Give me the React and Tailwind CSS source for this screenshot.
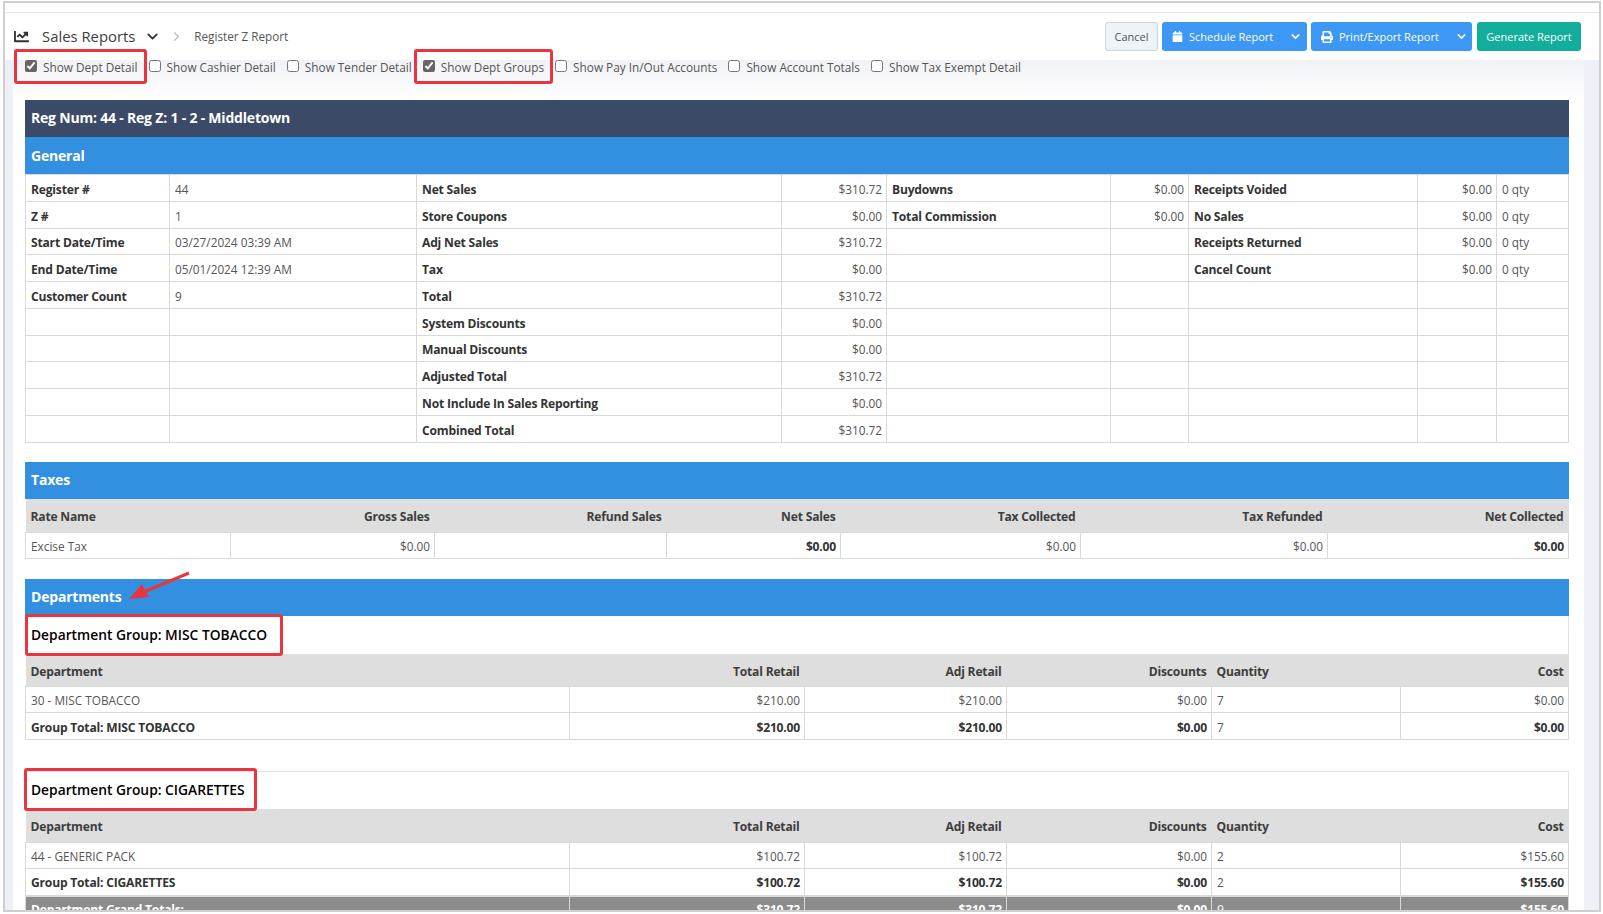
import { ChevronDown, ChevronRight } from "lucide-react";
import { FaCalendar, FaChartLine, FaPrint } from "react-icons/fa";

const general = [
  ["Register #", "44", "Net Sales", "$310.72", "Buydowns", "$0.00", "Receipts Voided", "$0.00", "0 qty"],
  ["Z #", "1", "Store Coupons", "$0.00", "Total Commission", "$0.00", "No Sales", "$0.00", "0 qty"],
  ["Start Date/Time", "03/27/2024 03:39 AM", "Adj Net Sales", "$310.72", "", "", "Receipts Returned", "$0.00", "0 qty"],
  ["End Date/Time", "05/01/2024 12:39 AM", "Tax", "$0.00", "", "", "Cancel Count", "$0.00", "0 qty"],
  ["Customer Count", "9", "Total", "$310.72", "", "", "", "", ""],
  ["", "", "System Discounts", "$0.00", "", "", "", "", ""],
  ["", "", "Manual Discounts", "$0.00", "", "", "", "", ""],
  ["", "", "Adjusted Total", "$310.72", "", "", "", "", ""],
  ["", "", "Not Include In Sales Reporting", "$0.00", "", "", "", "", ""],
  ["", "", "Combined Total", "$310.72", "", "", "", "", ""],
];

const checks = [
  { label: "Show Dept Detail", on: true },
  { label: "Show Cashier Detail" },
  { label: "Show Tender Detail" },
  { label: "Show Dept Groups", on: true },
  { label: "Show Pay In/Out Accounts" },
  { label: "Show Account Totals" },
  { label: "Show Tax Exempt Detail" },
];

function Band({ children, dark, className = "pb-[1px]" }) {
  return (
    <div className={`h-[37px] flex items-center px-[6px] text-[14px] font-bold text-white tracking-[-0.2px] ${dark ? "bg-[#3b4a66]" : "bg-[#338fe0]"} ${className}`}>
      {children}
    </div>
  );
}

function Cell({ children, right, bold }) {
  return (
    <td className={`border border-[#d9d9d9] pl-[5px] pr-[4px] pb-0 overflow-hidden whitespace-nowrap ${right ? "text-right" : "text-left"} ${bold ? "pt-[4px] text-[12.1px] font-bold tracking-[-0.2px] text-[#333]" : "pt-[3px] text-[11.8px] text-[#555]"}`}>
      {children}
    </td>
  );
}

function Head({ children, right }) {
  return (
    <th className={`pl-[5px] pr-[5px] pt-[4px] pb-0 text-[12.1px] font-bold tracking-[-0.2px] text-[#3d3d3d] ${right ? "text-right" : "text-left"}`}>{children}</th>
  );
}

function DeptTable({ name, row, total }) {
  return (
    <table className="w-full table-fixed border-collapse">
      <colgroup>
        <col className="w-[544px]" />
        <col className="w-[235px]" />
        <col className="w-[202px]" />
        <col className="w-[205px]" />
        <col className="w-[189px]" />
        <col />
      </colgroup>
      <thead>
        <tr className="h-[33px] bg-[#dedede]">
          <Head>Department</Head>
          <Head right>Total Retail</Head>
          <Head right>Adj Retail</Head>
          <Head right>Discounts</Head>
          <Head>Quantity</Head>
          <Head right>Cost</Head>
        </tr>
      </thead>
      <tbody>
        <tr className="h-[26px]">
          <Cell>{row[0]}</Cell>
          <Cell right>{row[1]}</Cell>
          <Cell right>{row[2]}</Cell>
          <Cell right>{row[3]}</Cell>
          <Cell>{row[4]}</Cell>
          <Cell right>{row[5]}</Cell>
        </tr>
        <tr className="h-[27px]">
          <Cell bold>Group Total: {name}</Cell>
          <Cell bold right>{total[0]}</Cell>
          <Cell bold right>{total[1]}</Cell>
          <Cell bold right>{total[2]}</Cell>
          <Cell>{total[3]}</Cell>
          <Cell bold right>{total[4]}</Cell>
        </tr>
      </tbody>
    </table>
  );
}

export default function App() {
  return (
    <div className="relative w-[1603px] h-[914px] overflow-hidden bg-white font-['Open_Sans',sans-serif] text-[11.8px] text-[#555]">
      <div className="ml-[3px] mt-[1px] w-[1598px] h-[911px] border-2 border-[#cfcfcf] overflow-hidden flex flex-col">
        <div className="h-[10px] border-b border-[#e8e8e8] shrink-0" />

        <header className="h-[47px] shrink-0 flex items-center bg-white pl-[9px] pr-[18px]">
          <FaChartLine className="text-[15px] text-[#333]" />
          <span className="ml-[13px] text-[14.85px] text-[#3d3d3d]">Sales Reports</span>
          <ChevronDown className="ml-[9px] w-[17px] h-[17px] text-[#333]" strokeWidth={2.5} />
          <ChevronRight className="ml-[8px] w-[15px] h-[15px] text-[#bbb]" />
          <span className="ml-[10px] text-[11.7px] text-[#555]">Register Z Report</span>

          <div className="ml-auto flex items-center gap-[4px] text-[11px] text-white">
            <button type="button" className="w-[53px] h-[29px] pt-[1px] rounded-[3px] border border-[#c9d3dc] bg-[#eef3f7] text-[#555]">Cancel</button>
            <div className="flex w-[145px] h-[29px] items-center rounded-[3px] bg-[#3c97f5] pl-[10px]">
              <FaCalendar className="text-[11px]" />
              <span className="ml-[6px] pt-[1px]">Schedule Report</span>
              <ChevronDown className="ml-auto mr-[5px] w-[13px] h-[13px]" strokeWidth={3} />
            </div>
            <div className="flex w-[161px] h-[29px] items-center rounded-[3px] bg-[#3c97f5] pl-[10px]">
              <FaPrint className="text-[12px]" />
              <span className="ml-[6px] pt-[1px]">Print/Export Report</span>
              <ChevronDown className="ml-auto mr-[4px] w-[13px] h-[13px]" strokeWidth={3} />
            </div>
            <button type="button" className="ml-[1px] w-[104px] h-[29px] pt-[1px] rounded-[3px] bg-[#12ae9b]">Generate Report</button>
          </div>
        </header>

        <div className="flex flex-1 min-h-0">
          <div className="w-[8px] shrink-0 bg-[#eef0f7]" />

          <main className="w-[1571px] shrink-0 overflow-hidden bg-white">
            <div className="h-[40px] pl-[12px] bg-gradient-to-b from-[#f1f2f6] to-white">
              <div className="flex items-center h-[13px] gap-[11px]">
                {checks.map((c) => (
                  <label key={c.label} className="flex items-center gap-[6px] whitespace-nowrap">
                    <input type="checkbox" defaultChecked={c.on} className="-mt-[2px] w-[12px] h-[12px] accent-[#666]" />
                    <span className="pt-[3px]">{c.label}</span>
                  </label>
                ))}
              </div>
            </div>

            <div className="ml-[12px] w-[1544px]">
              <Band dark className="pb-[3px]">Reg Num: 44 - Reg Z: 1 - 2 - Middletown</Band>
              <Band>General</Band>
              <table className="w-full table-fixed border-collapse">
                <colgroup>
                  <col className="w-[144px]" />
                  <col className="w-[247px]" />
                  <col className="w-[365px]" />
                  <col className="w-[105px]" />
                  <col className="w-[224px]" />
                  <col className="w-[78px]" />
                  <col className="w-[229px]" />
                  <col className="w-[79px]" />
                  <col />
                </colgroup>
                <tbody>
                  {general.map((r, i) => (
                    <tr key={i} className={i === 2 || i === 6 ? "h-[26px]" : "h-[27px]"}>
                      <Cell bold>{r[0]}</Cell>
                      <Cell>{r[1]}</Cell>
                      <Cell bold>{r[2]}</Cell>
                      <Cell right>{r[3]}</Cell>
                      <Cell bold>{r[4]}</Cell>
                      <Cell right>{r[5]}</Cell>
                      <Cell bold>{r[6]}</Cell>
                      <Cell right>{r[7]}</Cell>
                      <Cell>{r[8]}</Cell>
                    </tr>
                  ))}
                </tbody>
              </table>

              <div className="mt-[19px]">
                <Band className="pb-[3px]">Taxes</Band>
                <table className="w-full table-fixed border-collapse">
                  <colgroup>
                    <col className="w-[205px]" />
                    <col className="w-[204px]" />
                    <col className="w-[232px]" />
                    <col className="w-[174px]" />
                    <col className="w-[240px]" />
                    <col className="w-[247px]" />
                    <col />
                  </colgroup>
                  <thead>
                    <tr className="h-[33px] bg-[#dedede]">
                      <Head>Rate Name</Head>
                      <Head right>Gross Sales</Head>
                      <Head right>Refund Sales</Head>
                      <Head right>Net Sales</Head>
                      <Head right>Tax Collected</Head>
                      <Head right>Tax Refunded</Head>
                      <Head right>Net Collected</Head>
                    </tr>
                  </thead>
                  <tbody>
                    <tr className="h-[26px]">
                      <Cell>Excise Tax</Cell>
                      <Cell right>$0.00</Cell>
                      <Cell right />
                      <Cell bold right>$0.00</Cell>
                      <Cell right>$0.00</Cell>
                      <Cell right>$0.00</Cell>
                      <Cell bold right>$0.00</Cell>
                    </tr>
                  </tbody>
                </table>
              </div>

              <div className="mt-[20px]">
                <Band>Departments</Band>
                <div className="h-[38px] flex items-center px-[5px] pt-[1px] text-[13.8px] font-semibold text-black border-x border-[#e2e2e2]">
                  Department Group: MISC TOBACCO
                </div>
                <DeptTable
                  name="MISC TOBACCO"
                  row={["30 - MISC TOBACCO", "$210.00", "$210.00", "$0.00", "7", "$0.00"]}
                  total={["$210.00", "$210.00", "$0.00", "7", "$0.00"]}
                />
              </div>

              <div className="mt-[31px] border-t border-[#e2e2e2]">
                <div className="h-[37px] flex items-center px-[5px] text-[13.8px] font-semibold text-black border-x border-[#e2e2e2]">
                  Department Group: CIGARETTES
                </div>
                <DeptTable
                  name="CIGARETTES"
                  row={["44 - GENERIC PACK", "$100.72", "$100.72", "$0.00", "2", "$155.60"]}
                  total={["$100.72", "$100.72", "$0.00", "2", "$155.60"]}
                />
                <table className="w-full table-fixed border-collapse text-[12.1px] bg-[#8c8c8c] text-white font-bold tracking-[-0.2px]">
                  <colgroup>
                    <col className="w-[544px]" />
                    <col className="w-[235px]" />
                    <col className="w-[202px]" />
                    <col className="w-[205px]" />
                    <col className="w-[189px]" />
                    <col />
                  </colgroup>
                  <tbody>
                    <tr className="h-[26px]">
                      <td className="pl-[5px] pr-[4px] pt-[2px] border border-[#d9d9d9]">Department Grand Totals:</td>
                      <td className="pl-[5px] pr-[4px] pt-[2px] text-right border border-[#d9d9d9]">$310.72</td>
                      <td className="pl-[5px] pr-[4px] pt-[2px] text-right border border-[#d9d9d9]">$310.72</td>
                      <td className="pl-[5px] pr-[4px] pt-[2px] text-right border border-[#d9d9d9]">$0.00</td>
                      <td className="pl-[5px] pr-[4px] pt-[2px] font-normal border border-[#d9d9d9]">9</td>
                      <td className="pl-[5px] pr-[4px] pt-[2px] text-right border border-[#d9d9d9]">$155.60</td>
                    </tr>
                  </tbody>
                </table>
              </div>
            </div>
          </main>

          <div className="flex-1 bg-[#eef0f7]" />
        </div>
      </div>

      {/* annotations drawn over the screenshot */}
      <div className="absolute left-[14px] top-[49px] w-[133px] h-[35px] border-[3px] border-[#e8353f] rounded-[3px]" />
      <div className="absolute left-[414px] top-[49px] w-[139px] h-[35px] border-[3px] border-[#e8353f] rounded-[3px]" />
      <div className="absolute left-[25px] top-[614px] w-[258px] h-[42px] border-[3px] border-[#e8353f] rounded-[3px]" />
      <div className="absolute left-[24px] top-[768px] w-[233px] h-[43px] border-[3px] border-[#e8353f] rounded-[3px]" />
      <svg className="absolute left-[125px] top-[568px]" width="70" height="36" viewBox="0 0 70 36">
        <path d="M64 5 L14 26" stroke="#e8353f" strokeWidth="3" fill="none" />
        <path d="M4 31 L17 16 L24 29 Z" fill="#e8353f" />
      </svg>
    </div>
  );
}
